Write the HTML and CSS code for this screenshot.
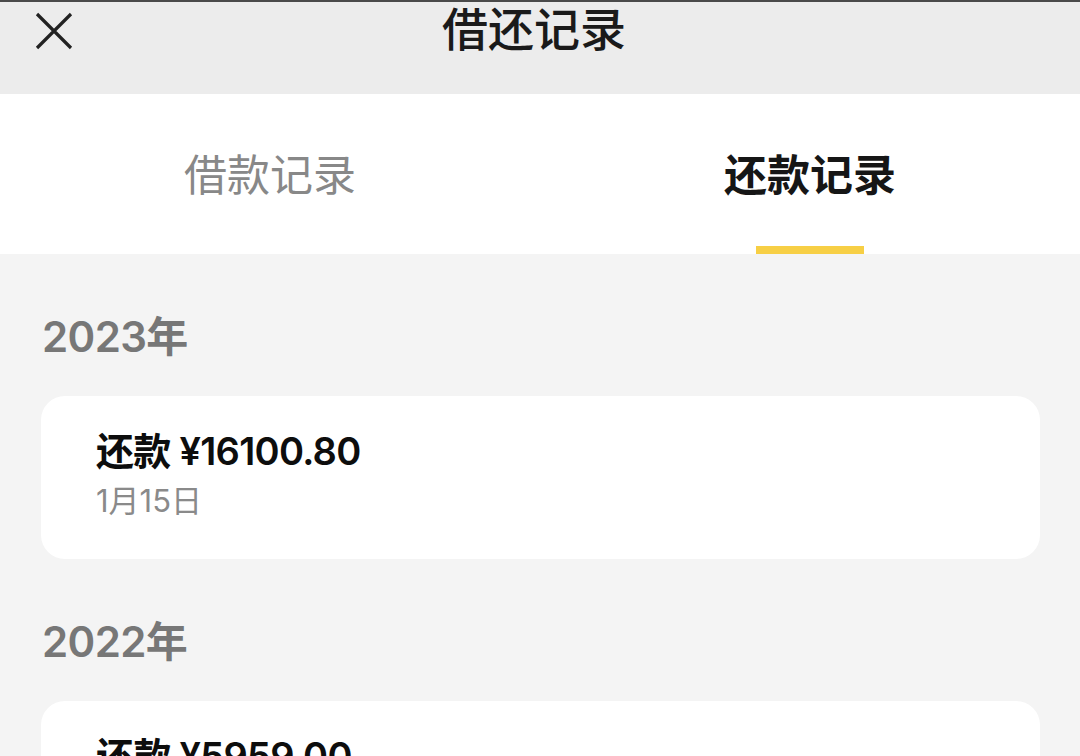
FILE: index.html
```html
<!DOCTYPE html>
<html lang="zh-CN">
<head>
  <meta charset="UTF-8" />
  <meta name="viewport" content="width=device-width, initial-scale=1.0" />
  <title>借还记录</title>
  <link rel="stylesheet" href="styles.css">
</head>
<body>
  <header class="top-bar">
    <button type="button" class="close-btn" aria-label="关闭">
      <svg width="40" height="40" viewBox="0 0 40 40"><path d="M3 3L37 37M37 3L3 37" stroke="#222" stroke-width="3.2" fill="none"/></svg>
    </button>
    <h1>借还记录</h1>
  </header>

  <nav class="tabs">
    <div class="tab">借款记录</div>
    <div class="tab active">还款记录</div>
  </nav>

  <main class="records">
    <!-- 2023 -->
    <section class="year-group">
      <h2>2023年</h2>
      <div class="card">
        <div class="amount">还款 ¥16100.80</div>
        <div class="date">1月15日</div>
      </div>
    </section>

    <!-- 2022 -->
    <section class="year-group">
      <h2>2022年</h2>
      <div class="card">
        <div class="amount">还款 ¥5959.00</div>
        <div class="date">12月15日</div>
      </div>
    </section>
  </main>
</body>
</html>
```

FILE: styles.css
```css
*{box-sizing:border-box}
html,body{margin:0;padding:0}
body{font-family:Inter,"Noto Sans CJK SC",sans-serif;background:#f4f4f4;color:#111;width:1080px;height:756px;overflow:hidden}
.top-bar{height:94px;background:#ececec;border-top:2px solid #4a4a4a;position:relative;display:flex;justify-content:center}
.top-bar h1{margin:0 12px 0 0;font-size:46px;font-weight:500;line-height:54px;color:#1a1a1a}
.close-btn{position:absolute;left:34px;top:9px;border:none;background:none;padding:0;width:40px;height:40px;cursor:pointer}
.close-btn svg{display:block}
.tabs{height:160px;background:#fff;display:flex}
.tab{flex:1;display:flex;justify-content:center;align-items:center;padding-bottom:4px;font-size:43px;color:#888;position:relative}
.tab.active{color:#161616;font-weight:700}
.tab.active::after{content:"";position:absolute;bottom:0;left:50%;margin-left:-54px;width:108px;height:8px;background:#f7cf45}
.records{padding:0 40px 0 41px}
.year-group h2{margin:0;padding:56px 0 32px 1px;font-size:42px;line-height:54px;font-weight:600;letter-spacing:-0.6px;color:#777}
.card{background:#fff;border-radius:24px;height:163px;padding:30px 55px}
.amount{font-size:38px;font-weight:600;line-height:50px;letter-spacing:-0.7px;color:#0d0d0d}
.date{font-size:31px;line-height:42px;color:#8a8a8a;margin-top:4px}
```
